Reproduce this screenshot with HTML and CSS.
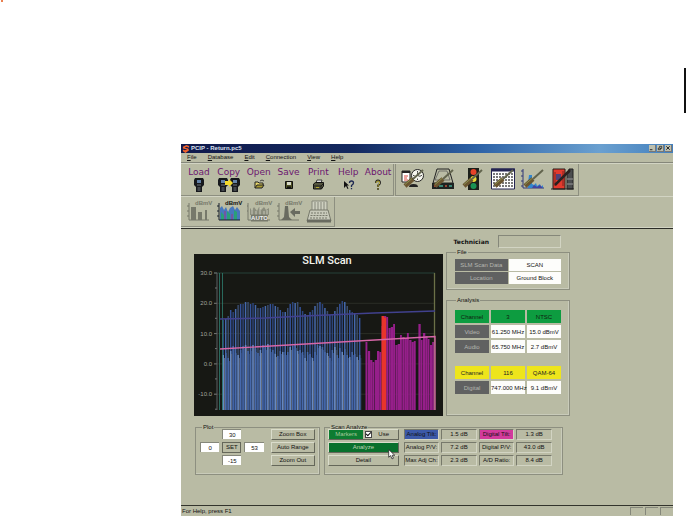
FILE: index.html
```html
<!DOCTYPE html>
<html lang="en">
<head>
<meta charset="utf-8">
<title>PCIP - Return.pc5</title>
<link rel="stylesheet" href="styles.css">
</head>
<body>
<header class="sheet-head"><span class="dot"></span><span class="tab"></span></header>
<main class="window">
  <div class="titlebar">
    <svg class="logo" viewBox="0 0 9 9"><path d="M8 1 5 0 1 2 1 4 6 5 3 6 1 5 1 7 4 9 8 6 7 4 3 3 5 2 8 3z" fill="#f0622c"/></svg>
    <h1>PCIP - Return.pc5</h1>
    <div class="winbtns">
      <button aria-label="Minimize"><svg viewBox="0 0 7 7"><path d="M1 5.500h3" stroke="#111"/></svg></button>
      <button aria-label="Restore"><svg viewBox="0 0 7 7"><path d="M3 3V1.500h2.500V4H4M1.500 3.500h2.500v2H1.500z" fill="none" stroke="#111" stroke-width=".8"/></svg></button>
      <button aria-label="Close"><svg viewBox="0 0 7 7"><path d="M1.500 1.500l4 4m0-4l-4 4" stroke="#111"/></svg></button>
    </div>
  </div>
  <nav class="menu">
    <button><u>F</u>ile</button><button><u>D</u>atabase</button><button><u>E</u>dit</button><button><u>C</u>onnection</button><button><u>V</u>iew</button><button><u>H</u>elp</button>
  </nav>
  <div class="bars">
    <div class="toolbar main-tools">
      <button>Load<svg viewBox="0 0 24 16"><g id="meter"><path d="M8 1h8l1 2v5l-2 2v5H9v-5L7 8V3z" fill="#16181c"/><path d="M10 3h4v3h-4z" fill="#6382a8"/><path d="M10 8h4M10.500 11h3M10.500 13h3" stroke="#89909a" stroke-width=".8"/></g></svg></button>
      <button>Copy<svg viewBox="0 0 24 16"><use href="#meter" x="-6"/><use href="#meter" x="6"/><path d="M8 4h4V2l4 4-4 4V8H8z" fill="#f2d82c"/></svg></button>
      <button>Open<svg viewBox="0 0 24 16"><path d="M8 11V5h3l1 1h4v2" fill="#e5d46b" stroke="#222"/><path d="M8 11l2-3h7l-2 3z" fill="#a79a32" stroke="#222"/><path d="M13 4q2-2 4 0" fill="none" stroke="#222" stroke-width=".8"/></svg></button>
      <button>Save<svg viewBox="0 0 24 16"><path d="M8.500 4.500h7v7h-7z" fill="#4d4f24" stroke="#111"/><path d="M10 5h4v3h-4z" fill="#d6d8c8"/><path d="M10 9.500h4v2h-4z" fill="#111"/></svg></button>
      <button>Print<svg viewBox="0 0 24 16"><path d="M10 6l1-3h5l-1 3z" fill="#ddd" stroke="#222" stroke-width=".8"/><path d="M7.500 7l2-1.500h8V9l-2 3h-8z" fill="#55563f" stroke="#111"/><path d="M8 9h7l2-2M15 9v3" fill="none" stroke="#111" stroke-width=".8"/><path d="M10 10.500h3" stroke="#b5a831"/></svg></button>
      <button>Help<svg viewBox="0 0 24 16"><path d="M8 4v7l2-2 1.500 3 1-.5L11 8.500h2z" fill="#111"/><path d="M13.500 6q0-2 2-2t2 2q0 1-2 2.500V10M15.500 11v1.300" fill="none" stroke="#1d2852" stroke-width="1.300"/></svg></button>
      <button>About<svg viewBox="0 0 24 16"><path d="M10 6q0-2.500 2-2.500T14 6q0 1-2 2.500V10M12 11v1.700" fill="none" stroke="#222" stroke-width="2"/><path d="M10.200 6q0-2 1.800-2t1.700 2q0 1-1.700 2.300V10M12 11.200v1.200" fill="none" stroke="#cfc13a" stroke-width=".9"/></svg></button>
    </div>
    <div class="toolbar mode-tools">
      <button aria-label="Schedule"><svg viewBox="0 0 24 24"><path d="M1 3h8v11H1z" fill="#fff" stroke="#222"/><path d="M1 3h8v2H1z" fill="#222"/><path d="M3 8h4M3 10h3M3 12h4" stroke="#d84b43"/><circle cx="16.500" cy="7.500" r="6" fill="#f7f7ef" stroke="#222"/><path d="M16.500 3v1.500M16.500 10.500V12M12 7.500h1.500M19.500 7.500H21M16.500 7.500V4.500M16.500 7.500l3 1" stroke="#333" stroke-width=".9"/><path d="M8 19q0-3 4.500-3t4.500 3z" fill="#222"/><g id="driver"><path d="M22 2 12 11" stroke="#62644d" stroke-width="2"/><path d="M12 11 4 18" stroke="#6b5631" stroke-width="4.500"/><path d="M11 10.500 4 16.500" stroke="#87914f"/></g></svg></button>
      <button aria-label="Modem"><svg viewBox="0 0 24 24"><path d="M6 1h12l4 14H2z" fill="none" stroke="#222"/><path d="M8 3h8l3 9H4z" fill="none" stroke="#555" stroke-width=".7"/><path d="M1 15h22v6H1z" fill="#1e2321"/><path d="M3 18h3M14 18h2" stroke="#c3563e" stroke-width="1.500"/><path d="M8 18h4M18 18h3" stroke="#44a68f" stroke-width="1.500"/><use href="#driver"/></svg></button>
      <button aria-label="Limits"><svg viewBox="0 0 24 24"><path d="M7 0h11v22H7z" fill="#1c201b"/><circle cx="12.500" cy="4" r="3" fill="#e64328"/><circle cx="12.500" cy="11" r="3" fill="#eadb35"/><circle cx="12.500" cy="18" r="3" fill="#1a9254"/><use href="#driver" x="-1"/></svg></button>
      <button aria-label="Channel plan"><svg viewBox="0 0 24 24"><path d="M.5 1h23v20H.5z" fill="#fff" stroke="#252552"/><path d="M0 2h24" stroke="#252552" stroke-width="3"/><path d="M3 5v15M6 5v15M9 5v15M12 5v15M15 5v15M18 5v15M21 5v15" stroke="#333" stroke-width="1.300" stroke-dasharray="2 1"/><use href="#driver"/></svg></button>
      <button aria-label="Scan setup"><svg viewBox="0 0 24 24"><path d="M2 1v19h21M0 3h2M0 8h2M0 13h2M0 18h2" fill="none" stroke="#303879"/><path d="M7 20V15l1-8h3v9l2 1 2-2 1 3 3-2 1 3 2-2v3z" fill="#3186cf"/><path d="M11 20l2-3 3 2 3-2 3 3z" fill="#4442a0"/><use href="#driver"/></svg></button>
      <button aria-label="Exit"><svg viewBox="0 0 24 24"><path d="M2 1h12v20H2z" fill="#e33a2d" stroke="#281c1a"/><path d="M4 4v14M12 3v15" stroke="#812420"/><path d="M5 6h5v6H5z" fill="#514176"/><path d="M16 5h2v-4h4v20h-6z" fill="#4b4d4f" stroke="#222"/><path d="M16 11h6M16 16h6" stroke="#999"/><path d="M19 2 4 17" stroke="#2b211f" stroke-width="2.500"/><path d="M0 21h23" stroke="#222"/></svg></button>
    </div>
  </div>
  <div class="bars second">
    <div class="toolbar view-tools">
      <button aria-label="Level bars"><svg viewBox="0 0 24 25"><text x="8" y="6">dBmV</text><g stroke="#77796b" fill="#77796b"><path d="M2 4v17h20M0 7h2M0 12h2M0 17h2" fill="none"/><path d="M4 8h5v13H4zM11 13h4v8h-4zM18 11h2v10h-2z" stroke="none"/></g></svg></button>
      <button class="on" aria-label="Scan"><svg viewBox="0 0 24 25"><text x="8" y="6">dBmV</text><path d="M3 21V9l2-2 2 4 2-3 2 5 2-4 3-2 2 4 2-3 3 4v9z" fill="#4778bd"/><path d="M4 21v-8l3 3v5zM10 21V12l3 3v6zM17 21V11l3 2v8z" fill="#2aa078"/><path d="M7 21v-9h2v9zM14 21v-6h2v6z" fill="#7158a0"/><path d="M2 4v17h21M0 7h2M0 12h2M0 17h2" fill="none" stroke="#18202c"/></svg></button>
      <button aria-label="Auto scan"><svg viewBox="0 0 24 25"><text x="8" y="6">dBmV</text><path d="M3 16V9l2 2 2-3 3 4 2-4 2 3 3-3 2 3 3-2v7z" fill="#8b8d7d"/><path d="M5 17v-7M9 17v-5M13 17V9M17 17v-5M20 17v-6" stroke="#dfe1d2" stroke-width=".7"/><path d="M1 4v17h22M0 7h1M0 12h1" fill="none" stroke="#77796b"/><path d="M4 15.500h17v7H4z" fill="#77796b"/><text class="auto" x="12.500" y="21">AUTO</text></svg></button>
      <button aria-label="Single channel"><svg viewBox="0 0 24 25"><text x="8" y="6">dBmV</text><path d="M2 4v17h20M0 7h2M0 12h2M0 17h2" fill="none" stroke="#77796b"/><path d="M4 21l3-3 1-11h3l1 11 3 3z" fill="#696b60"/><path d="M13 13l5-4v3h5v3h-5v3z" fill="#696b60"/></svg></button>
      <button aria-label="Report"><svg viewBox="0 0 24 25"><path d="M5 2h15v10H5z" fill="#ced0c0" stroke="#85877a"/><path d="M7 4h11M7 6h11M7 8h11M7 10h11" stroke="#85877a" stroke-dasharray="2 1"/><path d="M3 11h18l3 11H0z" fill="#c8cabb" stroke="#77796b"/><path d="M4 14h16M3.500 16.500h17M3 19h18" stroke="#77796b" stroke-dasharray="2 1"/><path d="M0 22h24" stroke="#696b60" stroke-width="3"/></svg></button>
    </div>
  </div>
  <section class="workspace">
    <div class="upper">
      <svg class="chart" viewBox="0 0 249 162" role="img" aria-label="SLM Scan">
        <path d="M0 0h249v162H0z" fill="#171814"/>
        <text class="chart-title" x="133" y="10">SLM Scan</text>
        <g id="grid"></g><g id="spectrum"></g>
        <path d="M23 19v137" stroke="#5c6064"/><path d="M25.500 19v137M28.500 19v137" stroke="#2f7f70" stroke-width=".8"/>
        <path d="M240.500 19v137" stroke="#6b7047" stroke-width="1.300"/>
        <path d="M26 65 71 64 110 62 180 59 241 57" fill="none" stroke="#41418e" stroke-width="1.500"/>
        <path d="M26 95 241 82.500V156" fill="none" stroke="#d767a8" stroke-width="1.300"/>
      </svg>
      <aside class="side">
        <div class="tech"><label for="tech">Technician</label><input id="tech"></div>
        <fieldset class="file"><legend>File</legend>
          <table class="cells two"><tr><th>SLM Scan Data</th><td>SCAN</td></tr><tr><th>Location</th><td>Ground Block</td></tr></table>
        </fieldset>
        <fieldset class="analysis"><legend>Analysis</legend>
          <table class="cells three"><tr class="green"><th>Channel</th><th>3</th><th>NTSC</th></tr><tr><th>Video</th><td>61.250 MHz</td><td>15.0 dBmV</td></tr><tr><th>Audio</th><td>65.750 MHz</td><td>2.7 dBmV</td></tr></table>
          <table class="cells three"><tr class="yellow"><th>Channel</th><th>116</th><th>QAM-64</th></tr><tr><th>Digital</th><td>747.000 MHz</td><td>9.1 dBmV</td></tr></table>
        </fieldset>
      </aside>
    </div>
    <div class="lower">
      <fieldset class="plot"><legend>Plot</legend>
        <div class="limits">
          <input class="top" aria-label="Top level" value="30"><input class="left" aria-label="First channel" value="0"><button class="raised set">SET</button><input class="right" aria-label="Last channel" value="53"><input class="bottom" aria-label="Bottom level" value="-15">
        </div>
        <div class="stack"><button class="raised">Zoom Box</button><button class="raised">Auto Range</button><button class="raised">Zoom Out</button></div>
      </fieldset>
      <fieldset class="scan"><legend>Scan Analyze</legend>
        <div class="stack">
          <div class="raised markers"><button>Markers</button><input type="checkbox" id="use" checked><label for="use">Use</label></div>
          <button class="raised go">Analyze<svg class="cursor" viewBox="0 0 7 10"><path d="M.5.5v7l1.700-1.500L3.500 9l1.300-.6L3.600 5.700H6z" fill="#fff" stroke="#222" stroke-width=".7"/></svg></button>
          <button class="raised">Detail</button>
        </div>
        <table class="results">
          <tr><th class="blue">Analog Tilt:</th><td>1.5 dB</td><th class="pink">Digital Tilt:</th><td>1.3 dB</td></tr>
          <tr><th>Analog P/V:</th><td>7.2 dB</td><th>Digital P/V:</th><td>43.0 dB</td></tr>
          <tr><th>Max Adj Ch:</th><td>2.3 dB</td><th>A/D Ratio:</th><td>8.4 dB</td></tr>
        </table>
      </fieldset>
    </div>
  </section>
  <footer class="status"><span>For Help, press F1</span><i></i><i></i><i></i></footer>
</main>
<script src="chart.js"></script>
</body>
</html>
```
FILE: styles.css
```css
* { box-sizing: border-box; }
body { margin: 0; background: #fff; color: #111; font: 6px/8px "Liberation Sans", Arial, sans-serif; }
button, input { font: inherit; color: inherit; margin: 0; padding: 0; border: 0; border-radius: 0; background: none; min-width: 0; }
svg { display: block; }
.sheet-head { display: flex; justify-content: space-between; height: 144px; padding-left: 1px; }
.dot { width: 2px; height: 2px; background: #ea8050; }
.tab { width: 2px; height: 45px; margin-top: 68px; background: #111; }
.window { margin: 0 13px 0 181px; background: #b9bba4; }
.titlebar { display: flex; align-items: center; height: 9px; padding-left: 1px; background: linear-gradient(90deg, #101a4c, #14295f 35%, #2d62a6 60%, #6aa0d0 85%, #4480bd); color: #dde2ef; }
.logo { width: 8px; height: 8px; }
h1 { margin: 0 auto 0 1px; font-size: 6px; font-weight: bold; line-height: 9px; }
.winbtns { display: flex; }
.winbtns button { width: 7px; height: 7px; margin-right: 1px; background: #bdbfae; border: solid #777; border-width: 0 1px 1px 0; }
.menu { display: flex; gap: 11px; height: 10px; padding: 0 6px; border-bottom: 1px solid #85877a; }
.menu button { line-height: 9px; }
.bars { display: flex; height: 33px; border-top: 1px solid #d2d4c3; }
.toolbar { display: flex; border: solid #8d8f80; border-width: 0 1px 1px 0; }
.main-tools { padding-left: 3px; width: 213px; }
.toolbar button { width: 30px; display: flex; flex-direction: column; align-items: center; }
.main-tools button { font: 9px/10px "DejaVu Sans", sans-serif; color: #6c1670; padding-top: 3px; }
.main-tools svg { width: 24px; height: 16px; }
.mode-tools { width: 184px; margin-left: 1px; padding-left: 2px; border-left: 1px solid #8d8f80; }
.mode-tools button { padding-top: 4px; }
.mode-tools svg { width: 24px; height: 24px; }
.second { height: 32px; border-bottom: 1px solid #d2d4c3; }
.view-tools { width: 154px; padding-left: 3px; }
.view-tools button { padding-top: 2px; }
.view-tools svg { width: 24px; height: 25px; overflow: visible; }
.view-tools text { font: bold 6px "Liberation Sans", sans-serif; fill: #77796b; }
.view-tools .on text { fill: #111; }
.view-tools text.auto { font-size: 6px; fill: #eee; text-anchor: middle; }
.workspace { border-top: 1px solid #2b2c26; padding: 6px 103px 30px 13px; }
.upper { display: grid; grid-template-columns: 249fr 124fr; gap: 3px; align-items: end; }
.chart { width: 100%; }
.chart-title { font: 500 11px Roboto, sans-serif; fill: #f4f4ee; text-anchor: middle; }
.axis { font: 6px "Liberation Sans", sans-serif; fill: #a2a49c; text-anchor: end; }
.tech { display: flex; align-items: center; justify-content: flex-end; gap: 9px; padding-right: 9px; }
.tech label { font: bold 6px/9px "DejaVu Sans", sans-serif; }
.tech input { width: 63px; height: 13px; border: 1px solid #85877a; border-right-color: #d2d4c3; border-bottom-color: #d2d4c3; }
fieldset { min-width: 0; margin: 0; padding: 0; border: 1px solid #8d8f80; box-shadow: inset -1px -1px #c9cbba; }
legend { padding: 0 1px; margin-left: 2px; height: 4px; line-height: 4px; }
.file { height: 40px; margin-top: 2px; padding: 4px 7px; }
.analysis { height: 118px; margin-top: 8px; padding: 6px 7px; }
table { border-collapse: separate; table-layout: fixed; text-align: center; }
th, td { padding: 0; font-weight: normal; white-space: nowrap; }
.cells { width: 100%; border-spacing: 1px; }
.cells th, .cells td { height: 12px; }
.cells td { background: #fdfdfb; }
.cells th { background: #606161; color: #b5b6b0; }
.three { border-spacing: 2px; margin: 0 -1px 9px; width: calc(100% + 2px); }
.three th, .three td { height: 13px; }
.cells .green th { background: #0d9c40; color: #10200f; }
.cells .yellow th { background: #eee51c; color: #222; }
.lower { display: grid; grid-template-columns: 125fr 239fr; gap: 4px; padding: 9px 7px 0 1px; }
.lower fieldset { height: 50px; }
.plot { display: grid; grid-template-columns: 63fr 44fr; gap: 7px; padding: 0 4px; }
.limits { display: grid; grid-template-columns: repeat(3, 1fr); grid-template-rows: repeat(3, 11px); gap: 2px 3px; }
.limits input { width: 100%; height: 10px; text-align: center; background: #fff; border: 1px solid #85877a; border-width: 1px 0 0 1px; }
.limits .top { grid-area: 1 / 2; }
.limits .left { grid-area: 2 / 1; }
.limits .set { grid-area: 2 / 2; border-color: #65675a; }
.limits .right { grid-area: 2 / 3; }
.limits .bottom { grid-area: 3 / 2; }
.stack { display: grid; grid-template-rows: repeat(3, 11px); gap: 2px; }
.raised { line-height: 9px; border: 1px solid; border-color: #dadccb #65675a #65675a #dadccb; }
.scan { display: grid; grid-template-columns: 71fr 153fr; gap: 3px; padding: 0 8px 0 3px; }
.markers { display: flex; align-items: center; }
.markers button { flex: 0 0 50%; background: #0d7c31; color: #a9ca9f; line-height: 9px; }
.markers input { appearance: none; width: 7px; height: 7px; margin: 0 6px 0 2px; background: #fff; border: 1px solid #444; }
.markers input:checked::before { content: ""; display: block; width: 4px; height: 2px; border: solid #111; border-width: 0 0 1px 1px; transform: rotate(-45deg); }
.go { position: relative; background: #08702c; color: #c0d5b6; }
.cursor { position: absolute; right: 2px; top: 6px; width: 8px; height: 11px; }
.results { width: 100%; height: 41px; border-spacing: 2px; margin-top: -2px; }
.results th, .results td { height: 11px; line-height: 9px; border: 1px solid; border-color: #77796b #d2d4c3 #d2d4c3 #77796b; }
.results .blue { background: #3c59a8; }
.results .pink { background: #d33b9c; }
.status { display: flex; height: 11px; border-top: 1px solid #33342d; }
.status span { flex: 1; line-height: 10px; padding-left: 1px; }
.status i { width: 13px; margin: 1px 0 1px 2px; border: solid #85877a; border-width: 1px 0 0 1px; }
```
FILE: chart.js
```javascript
const NS = "http://www.w3.org/2000/svg";
const BASE = 156;

function add(parent, name, attrs, text) {
  const node = document.createElementNS(NS, name);
  for (const key in attrs) node.setAttribute(key, attrs[key]);
  if (text) node.textContent = text;
  parent.appendChild(node);
}

const grid = document.getElementById("grid");
["30.0", "20.0", "10.0", "0.0", "-10.0"].forEach((label, i) => {
  const y = 19 + i * 30.3;
  add(grid, "path", { d: `M20 ${y}h221`, stroke: i ? "#30332b" : "#2b4d42", "stroke-width": 0.8 });
  add(grid, "path", { d: `M20 ${y}h3M21 ${y + 15}h2`, stroke: "#777" });
  add(grid, "text", { x: 18, y: y + 2, class: "axis" }, label);
});

const spectrum = document.getElementById("spectrum");
const bar = (x, top, width, fill) => add(spectrum, "rect", { x, y: top, width, height: BASE - top, fill });

// Tops of the analog carriers: picture level, then sound level
const video = [66, 65, 62, 56, 58, 55, 51, 50, 50, 48, 48, 50, 49, 51, 54, 54, 53, 52, 51, 50, 50, 52, 53, 56, 58, 58, 54, 50, 48, 49, 48, 53, 57, 60, 61, 58, 56, 52, 49, 48, 50, 54, 57, 61, 60, 57, 53, 50, 47, 48, 52, 56, 58, 59, 61, 64];
const audio = [101, 99, 104, 97, 92, 99, 101, 96, 92, 91, 97, 94, 91, 95, 99, 96, 91, 93, 90, 95, 96, 100, 102, 97, 98, 98, 98, 93, 92, 91, 97, 96, 98, 104, 98, 100, 104, 98, 91, 92, 93, 98, 99, 104, 96, 93, 101, 94, 98, 95, 101, 103, 98, 100, 103, 101];
const shades = ["#2c447b", "#4468ab", "#3a4c6c", "#34529a"];
video.forEach((top, i) => {
  const x = 28.5 + i * 2.48;
  bar(x, top, 1.5, shades[i % 4]);
  bar(x, audio[i], 1.5, i % 3 ? "#4669ad" : "#6689c4");
  bar(x + 1.5, audio[i] + 3, 0.8, i % 3 ? "#3b5587" : "#707887");
});

// Digital channels, with the selected carrier in red
const digital = [88, 97, 106, 108, 106, 97, 98, 72, 62, 63, 74, 73, 70, 91, 90, 81, 83, 84, 79, 86, 88, 87, 0, 70, 86, 79, 82, 85, 91, 88];
digital.forEach((top, i) => {
  if (top) bar(171.5 + i * 2.3, top, i % 3 ? 2.3 : 1.9, "#961f8a");
});
bar(187.5, 62, 2.5, "#e8352b");
bar(190, 63.5, 2.2, "#e8352b");
```
